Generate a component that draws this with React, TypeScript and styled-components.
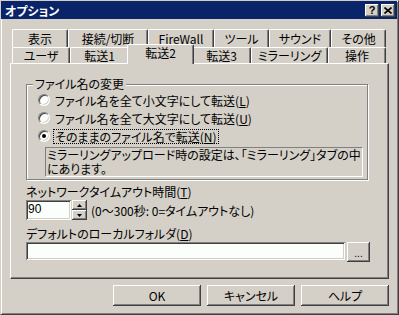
import React from "react";
import styled, { createGlobalStyle } from "styled-components";

const face = "#d4d0c8";

const GlobalStyle = createGlobalStyle`
  html, body { margin: 0; padding: 0; background: ${face}; }
  body {
    font-family: "Noto Sans CJK JP", "Noto Sans", sans-serif;
    font-size: 12px;
    color: #000;
  }
  * { box-sizing: border-box; }
`;

const Window = styled.div`
  width: 399px;
  height: 315px;
  background: ${face};
  border: 1px solid;
  border-color: ${face} #404040 #404040 ${face};
  box-shadow: inset 1px 1px #fff, inset -1px -1px #808080;
  display: flex;
  flex-direction: column;
  font-feature-settings: "palt";
  line-height: 13px;
`;

const TitleBar = styled.div`
  height: 18px;
  margin-right: 1px;
  background: #0a246a;
  display: flex;
  align-items: center;
  padding: 0 2px 0 4px;
`;

const Title = styled.span`
  flex: 1;
  color: #fff;
  font-weight: bold;
`;

const CaptionButton = styled.div<{ $gap?: number }>`
  width: 14px;
  height: 13px;
  margin-left: ${(p) => p.$gap ?? 0}px;
  background: ${face};
  box-shadow: inset -1px -1px #404040, inset 1px 1px #fff, inset -2px -2px #808080;
  display: flex;
  align-items: center;
  justify-content: center;
  font-family: "Liberation Sans", sans-serif;
  font-weight: bold;
  font-size: 11px;
  line-height: 11px;
`;

const Body = styled.div`
  display: flex;
  flex-direction: column;
  padding: 10px 9px 0 9px;
`;

const TabStrip = styled.div`
  display: flex;
  flex-direction: column;
  padding-left: 2px;
`;

const TabRow = styled.div`
  display: flex;
  align-items: flex-start;
  position: relative;
`;

const Tab = styled.div<{ $w: number; $h: number; $active?: boolean }>`
  width: ${(p) => p.$w + (p.$active ? 4 : 0)}px;
  height: ${(p) => (p.$active ? p.$h + 4 : p.$h)}px;
  margin: ${(p) => (p.$active ? "-3px -2px -1px -2px" : "0")};
  position: relative;
  z-index: ${(p) => (p.$active ? 2 : 0)};
  background: ${face};
  border-left: 1px solid #fff;
  border-top: 1px solid #fff;
  border-right: 1px solid #404040;
  border-radius: 2px 2px 0 0;
  box-shadow: inset -1px 0 #808080;
  display: flex;
  align-items: center;
  justify-content: center;
  padding-bottom: ${(p) => (p.$active ? 4 : 0)}px;
  white-space: nowrap;
`;

const Panel = styled.div`
  height: 216px;
  border: 1px solid;
  border-color: #fff #404040 #404040 #fff;
  box-shadow: inset -1px -1px #808080;
  padding-left: 15px;
  display: flex;
  flex-direction: column;
  align-items: flex-start;
`;

const Group = styled.div`
  position: relative;
  margin-top: 20px;
  width: 342px;
  height: 96px;
  border: 1px solid #808080;
  box-shadow: inset 1px 1px #fff, 1px 1px 0 #fff;
  padding: 6px 0 0 11px;
`;

const GroupLabel = styled.span`
  position: absolute;
  left: 6px;
  top: -8px;
  padding: 0 2px;
  background: ${face};
  white-space: nowrap;
`;

const RadioRow = styled.div`
  height: 18px;
  display: flex;
  align-items: center;
`;

const RadioDot = styled.span<{ $checked?: boolean }>`
  position: relative;
  width: 12px;
  height: 12px;
  border-radius: 50%;
  background: #fff;
  border: 1px solid;
  border-color: #808080 #fff #fff #808080;
  box-shadow: inset 1px 1px #404040, inset -1px -1px ${face};

  &::after {
    content: "";
    display: ${(p) => (p.$checked ? "block" : "none")};
    position: absolute;
    left: 3px;
    top: 3px;
    width: 4px;
    height: 4px;
    border-radius: 50%;
    background: #000;
  }
`;

const RadioLabel = styled.span<{ $focus?: boolean }>`
  margin-left: 3px;
  padding: 0 1px;
  border: 1px dotted ${(p) => (p.$focus ? "#000" : "transparent")};
  white-space: nowrap;
`;

const InfoBox = styled.div`
  margin: 2px 0 0 7px;
  width: 318px;
  height: 30px;
  border: 1px solid;
  border-color: #808080 #fff #fff #808080;
  padding: 0 1px;
  line-height: 14px;
  white-space: nowrap;
`;

const FieldLabel = styled.div<{ $top: number }>`
  margin-top: ${(p) => p.$top}px;
  white-space: nowrap;
`;

const FieldRow = styled.div`
  margin-top: 2px;
  display: flex;
  align-items: flex-start;
`;

const Edit = styled.div<{ $w: number; $h: number }>`
  width: ${(p) => p.$w}px;
  height: ${(p) => p.$h}px;
  background: #fbfffb;
  box-shadow: inset 1px 1px #808080, inset -1px -1px #fff, inset 2px 2px #404040,
    inset -2px -2px ${face};
  padding: 3px 0 0 2px;
  font-family: "Liberation Sans", sans-serif;
`;

const Spinner = styled.div`
  margin-left: 1px;
  display: flex;
  flex-direction: column;
`;

const SpinButton = styled.div`
  width: 15px;
  height: 10px;
  background: ${face};
  box-shadow: inset -1px -1px #404040, inset 1px 1px #fff, inset -2px -2px #808080;
  display: flex;
  align-items: center;
  justify-content: center;
`;

const Hint = styled.span`
  margin: 4px 0 0 4px;
  white-space: nowrap;
`;

const Button = styled.div<{ $w: number; $h: number }>`
  width: ${(p) => p.$w}px;
  height: ${(p) => p.$h}px;
  background: ${face};
  box-shadow: inset -1px -1px #404040, inset 1px 1px #fff, inset -2px -2px #808080;
  display: flex;
  align-items: center;
  justify-content: center;
  white-space: nowrap;
`;

const BrowseButton = styled(Button)`
  margin-left: 2px;
  font-family: "Liberation Sans", sans-serif;
  font-size: 10px;
  padding-top: 2px;
`;

const ButtonRow = styled.div`
  margin-top: 6px;
  display: flex;
  justify-content: flex-end;
  gap: 6px;
`;

const Key = styled.span`
  text-decoration: underline;
  text-underline-offset: 1px;
`;

const row1 = [
  { label: "表示", w: 56 },
  { label: "接続/切断", w: 80 },
  { label: "FireWall", w: 66 },
  { label: "ツール", w: 55 },
  { label: "サウンド", w: 62 },
  { label: "その他", w: 55 },
];

const row2 = [
  { label: "ユーザ", w: 58 },
  { label: "転送1", w: 59 },
  { label: "転送2", w: 63, active: true },
  { label: "転送3", w: 59 },
  { label: "ミラーリング", w: 77 },
  { label: "操作", w: 58 },
];

const radios = [
  { text: "ファイル名を全て小文字にして転送", key: "L" },
  { text: "ファイル名を全て大文字にして転送", key: "U" },
  { text: "そのままのファイル名で転送", key: "N", checked: true },
];

const Arrow = ({ up }: { up?: boolean }) => (
  <svg width="5" height="3" viewBox="0 0 5 3">
    <polygon points={up ? "2.5,0 5,3 0,3" : "0,0 5,0 2.5,3"} fill="#000" />
  </svg>
);

export default function App() {
  return (
    <>
      <GlobalStyle />
      <Window>
        <TitleBar>
          <Title>オプション</Title>
          <CaptionButton>?</CaptionButton>
          <CaptionButton $gap={2}>
            <svg width="8" height="7" viewBox="0 0 8 7">
              <path d="M0.5 0.5 L7.5 6.5 M7.5 0.5 L0.5 6.5" stroke="#000" strokeWidth="1.6" />
            </svg>
          </CaptionButton>
        </TitleBar>
        <Body>
          <TabStrip>
            <TabRow>
              {row1.map((t) => (
                <Tab key={t.label} $w={t.w} $h={18}>
                  {t.label}
                </Tab>
              ))}
            </TabRow>
            <TabRow>
              {row2.map((t) => (
                <Tab key={t.label} $w={t.w} $h={16} $active={t.active}>
                  {t.label}
                </Tab>
              ))}
            </TabRow>
          </TabStrip>
          <Panel>
            <Group>
              <GroupLabel>ファイル名の変更</GroupLabel>
              {radios.map((r) => (
                <RadioRow key={r.key}>
                  <RadioDot $checked={r.checked} />
                  <RadioLabel $focus={r.checked}>
                    {r.text}(<Key>{r.key}</Key>)
                  </RadioLabel>
                </RadioRow>
              ))}
              <InfoBox>
                ミラーリングアップロード時の設定は、「ミラーリング」タブの中
                <br />
                にあります。
              </InfoBox>
            </Group>
            <FieldLabel $top={5}>
              ネットワークタイムアウト時間(<Key>T</Key>)
            </FieldLabel>
            <FieldRow>
              <Edit $w={45} $h={20}>90</Edit>
              <Spinner>
                <SpinButton>
                  <Arrow up />
                </SpinButton>
                <SpinButton>
                  <Arrow />
                </SpinButton>
              </Spinner>
              <Hint>(0〜300秒: 0=タイムアウトなし)</Hint>
            </FieldRow>
            <FieldLabel $top={7}>
              デフォルトのローカルフォルダ(<Key>D</Key>)
            </FieldLabel>
            <FieldRow>
              <Edit $w={319} $h={18} />
              <BrowseButton $w={23} $h={20}>...</BrowseButton>
            </FieldRow>
          </Panel>
          <ButtonRow>
            <Button $w={88} $h={21}>OK</Button>
            <Button $w={88} $h={21}>キャンセル</Button>
            <Button $w={88} $h={21}>ヘルプ</Button>
          </ButtonRow>
        </Body>
      </Window>
    </>
  );
}
